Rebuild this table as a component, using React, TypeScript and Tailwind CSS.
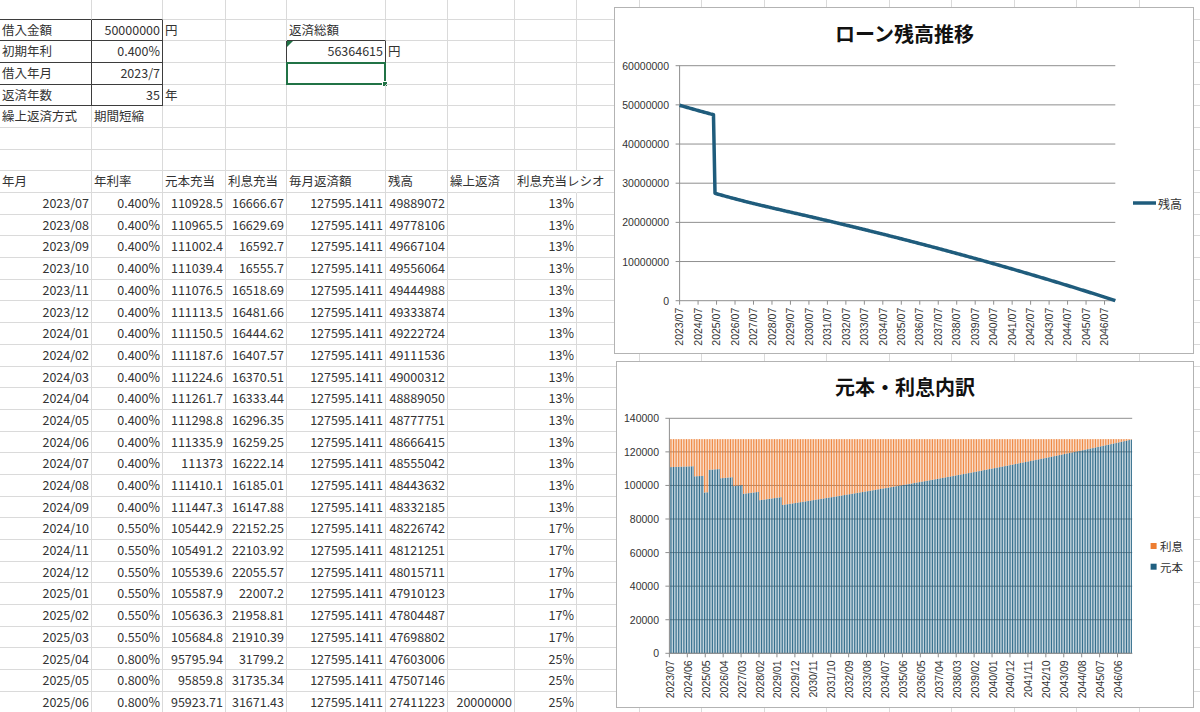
import React from "react";

type Cell = { v: string; r?: boolean } | null;

const tx = (v: string): Cell => ({ v });
const num = (v: string): Cell => ({ v, r: true });

// 返済表（画面に見えている分）
const table: string[][] = [
  ["2023/07", "0.400%", "110928.5", "16666.67", "127595.1411", "49889072", "", "13%"],
  ["2023/08", "0.400%", "110965.5", "16629.69", "127595.1411", "49778106", "", "13%"],
  ["2023/09", "0.400%", "111002.4", "16592.7", "127595.1411", "49667104", "", "13%"],
  ["2023/10", "0.400%", "111039.4", "16555.7", "127595.1411", "49556064", "", "13%"],
  ["2023/11", "0.400%", "111076.5", "16518.69", "127595.1411", "49444988", "", "13%"],
  ["2023/12", "0.400%", "111113.5", "16481.66", "127595.1411", "49333874", "", "13%"],
  ["2024/01", "0.400%", "111150.5", "16444.62", "127595.1411", "49222724", "", "13%"],
  ["2024/02", "0.400%", "111187.6", "16407.57", "127595.1411", "49111536", "", "13%"],
  ["2024/03", "0.400%", "111224.6", "16370.51", "127595.1411", "49000312", "", "13%"],
  ["2024/04", "0.400%", "111261.7", "16333.44", "127595.1411", "48889050", "", "13%"],
  ["2024/05", "0.400%", "111298.8", "16296.35", "127595.1411", "48777751", "", "13%"],
  ["2024/06", "0.400%", "111335.9", "16259.25", "127595.1411", "48666415", "", "13%"],
  ["2024/07", "0.400%", "111373", "16222.14", "127595.1411", "48555042", "", "13%"],
  ["2024/08", "0.400%", "111410.1", "16185.01", "127595.1411", "48443632", "", "13%"],
  ["2024/09", "0.400%", "111447.3", "16147.88", "127595.1411", "48332185", "", "13%"],
  ["2024/10", "0.550%", "105442.9", "22152.25", "127595.1411", "48226742", "", "17%"],
  ["2024/11", "0.550%", "105491.2", "22103.92", "127595.1411", "48121251", "", "17%"],
  ["2024/12", "0.550%", "105539.6", "22055.57", "127595.1411", "48015711", "", "17%"],
  ["2025/01", "0.550%", "105587.9", "22007.2", "127595.1411", "47910123", "", "17%"],
  ["2025/02", "0.550%", "105636.3", "21958.81", "127595.1411", "47804487", "", "17%"],
  ["2025/03", "0.550%", "105684.8", "21910.39", "127595.1411", "47698802", "", "17%"],
  ["2025/04", "0.800%", "95795.94", "31799.2", "127595.1411", "47603006", "", "25%"],
  ["2025/05", "0.800%", "95859.8", "31735.34", "127595.1411", "47507146", "", "25%"],
  ["2025/06", "0.800%", "95923.71", "31671.43", "127595.1411", "27411223", "20000000", "25%"],
];

const sheet: Cell[][] = [
  [],
  [tx("借入金額"), num("50000000"), tx("円"), null, tx("返済総額")],
  [tx("初期年利"), num("0.400%"), null, null, num("56364615"), tx("円")],
  [tx("借入年月"), num("2023/7")],
  [tx("返済年数"), num("35"), tx("年")],
  [tx("繰上返済方式"), tx("期間短縮")],
  [],
  [],
  ["年月", "年利率", "元本充当", "利息充当", "毎月返済額", "残高", "繰上返済", "利息充当レシオ"].map(tx),
  ...table.map((r) => r.map((v) => (v ? num(v) : null))),
];

const COLS = 18;

// グラフ用のシミュレーション
const PAY = 127595.1411;
const rateAt = (i: number) =>
  i < 15 ? 0.004 : i < 21 ? 0.0055 : i < 31 ? 0.008 : i < 39 ? 0.0105 : i < 45 ? 0.013 : i < 55 ? 0.0155 : i < 69 ? 0.018 : 0.0205;

type Month = { prin: number; int: number; bal: number };
const months: Month[] = [];
{
  let bal = 50000000;
  for (let i = 0; bal > 1 && i < 420; i++) {
    const int = (bal * rateAt(i)) / 12;
    const prin = Math.min(PAY - int, bal);
    // 端数の最終回はグラフに出さない
    if (prin < PAY * 0.9 && prin === bal) {
      months[months.length - 1].bal = 0;
      break;
    }
    bal -= prin;
    if (i === 23) bal -= 20000000;
    months.push({ prin, int, bal: Math.max(bal, 0) });
  }
}

const fmtDate = (i: number) => {
  const m = 6 + i;
  return `${2023 + Math.floor(m / 12)}/${String((m % 12) + 1).padStart(2, "0")}`;
};

const LABEL_FONT = "'Liberation Sans', Arial, sans-serif";
const JP_FONT = "'Noto Sans CJK JP', sans-serif";

function BalanceChart() {
  const L = 64.6, R = 500.3, T = 57.7, B = 292.7;
  const n = months.length;
  const px = (i: number) => L + (i * (R - L)) / (n - 1);
  const py = (v: number) => B - (v / 60000000) * (B - T);
  const pts = months.map((m, i) => `${px(i).toFixed(2)},${py(m.bal).toFixed(2)}`).join(" ");
  const ticks = [0, 1, 2, 3, 4, 5, 6];
  const xs: number[] = [];
  for (let i = 0; i < n; i += 12) xs.push(i);

  return (
    <div className="absolute left-[614px] top-[7px] h-[347px] w-[580px] border border-[#b3b3b3] bg-white">
      <svg width="578" height="345" className="block">
        <text x="289.6" y="25" textAnchor="middle" dominantBaseline="central" fontSize="20" fontWeight="700" fontFamily={JP_FONT} fill="#111">
          ローン残高推移
        </text>
        {ticks.map((k) => (
          <g key={k}>
            <line x1={L - 4} x2={R} y1={py(k * 10000000)} y2={py(k * 10000000)} stroke="#8f8f8f" strokeWidth="1" />
            <text x="54" y={py(k * 10000000)} textAnchor="end" dominantBaseline="central" fontSize="10.5" fontFamily={LABEL_FONT} fill="#333">
              {k === 0 ? "0" : `${k}0000000`}
            </text>
          </g>
        ))}
        <line x1={L} x2={L} y1={T} y2={B} stroke="#8f8f8f" />
        {xs.map((i) => (
          <g key={i}>
            <line x1={px(i)} x2={px(i)} y1={B} y2={B + 4} stroke="#8f8f8f" />
            <text transform={`translate(${px(i) + 3.7},${B + 7}) rotate(-90)`} textAnchor="end" fontSize="10.5" fontFamily={LABEL_FONT} fill="#333">
              {fmtDate(i)}
            </text>
          </g>
        ))}
        <polyline points={pts} fill="none" stroke="#1f5c7c" strokeWidth="3.5" strokeLinejoin="round" />
        <line x1="518" x2="541" y1="195" y2="195" stroke="#1f5c7c" strokeWidth="3.5" />
        <text x="543" y="195" dominantBaseline="central" fontSize="12" fontFamily={JP_FONT} fill="#333">
          残高
        </text>
      </svg>
    </div>
  );
}

function BreakdownChart() {
  const L = 52.4, R = 515.2, T = 56.3, B = 291.3;
  const n = months.length;
  const slot = (R - L) / n;
  const py = (v: number) => B - (v / 140000) * (B - T);
  const ticks = [0, 1, 2, 3, 4, 5, 6, 7];
  const xs: number[] = [];
  for (let i = 0; i < n; i += 11) xs.push(i);
  const bw = slot * 0.55;

  return (
    <div className="absolute left-[616px] top-[361px] h-[347px] w-[578px] border border-[#b3b3b3] bg-white">
      <svg width="576" height="345" className="block">
        <text x="288" y="24.7" textAnchor="middle" dominantBaseline="central" fontSize="20" fontWeight="700" fontFamily={JP_FONT} fill="#111">
          元本・利息内訳
        </text>
        {ticks.map((k) => (
          <g key={k}>
            <line x1={L - 4} x2={R} y1={py(k * 20000)} y2={py(k * 20000)} stroke="#8f8f8f" strokeWidth="1" />
            <text x="42" y={py(k * 20000)} textAnchor="end" dominantBaseline="central" fontSize="10.5" fontFamily={LABEL_FONT} fill="#333">
              {k === 0 ? "0" : String(k * 20000)}
            </text>
          </g>
        ))}
        {months.map((m, i) => {
          const x = L + i * slot + (slot - bw) / 2;
          const yp = py(m.prin);
          const yt = py(m.prin + m.int);
          return (
            <g key={i}>
              <rect x={x} width={bw} y={yp} height={B - yp} fill="#1f5f80" />
              <rect x={x} width={bw} y={yt} height={yp - yt} fill="#ed7d31" />
            </g>
          );
        })}
        <line x1={L} x2={L} y1={T} y2={B} stroke="#8f8f8f" />
        <line x1={L} x2={R} y1={B} y2={B} stroke="#8f8f8f" />
        {xs.map((i) => (
          <g key={i}>
            <line x1={L + i * slot} x2={L + i * slot} y1={B} y2={B + 4} stroke="#8f8f8f" />
            <text transform={`translate(${L + (i + 0.5) * slot + 3.7},${B + 7}) rotate(-90)`} textAnchor="end" fontSize="10.5" fontFamily={LABEL_FONT} fill="#333">
              {fmtDate(i)}
            </text>
          </g>
        ))}
        <rect x="533.6" y="181" width="6" height="6" fill="#ed7d31" />
        <text x="543" y="184" dominantBaseline="central" fontSize="11.5" fontFamily={JP_FONT} fill="#333">
          利息
        </text>
        <rect x="533.6" y="201.7" width="6" height="6" fill="#1f5f80" />
        <text x="543" y="204.7" dominantBaseline="central" fontSize="11.5" fontFamily={JP_FONT} fill="#333">
          元本
        </text>
      </svg>
    </div>
  );
}

function SheetCell({ cell, row, col }: { cell: Cell; row: number; col: number }) {
  const inBlock = col <= 1 && row >= 1 && row <= 4;
  const darkRight = inBlock || (row === 2 && (col === 3 || col === 4));
  const darkBottom = (col <= 1 && row >= 0 && row <= 4) || (col === 4 && (row === 1 || row === 2));
  const noRight = row === 8 && col === 7;
  const right = darkRight ? "border-r-[#3d3d3d]" : noRight ? "border-r-transparent" : "border-r-[#dadada]";
  const bottom = darkBottom ? "border-b-[#3d3d3d]" : "border-b-[#dadada]";

  return (
    <div
      className={`relative flex items-center whitespace-nowrap border-r border-b px-[2px] ${right} ${bottom} ${
        cell?.r ? "justify-end" : "justify-start"
      }`}
    >
      {cell?.v}
      {row === 2 && col === 4 && (
        <svg className="absolute left-0 top-0" width="6" height="6">
          <path d="M0 0H6L0 6Z" fill="#217346" />
        </svg>
      )}
      {row === 3 && col === 4 && (
        <div className="absolute bottom-[-1px] left-[-1px] right-[-1px] top-[-1px] border-2 border-[#217346]">
          <div className="absolute bottom-[-4px] right-[-4px] h-[6px] w-[6px] border border-white bg-[#217346]" />
        </div>
      )}
    </div>
  );
}

export default function App() {
  return (
    <div className="relative h-[712px] w-[1200px] overflow-hidden bg-white font-['Noto_Sans_CJK_JP','Liberation_Sans',sans-serif] text-[12.5px] leading-none text-[#333]">
      <div className="grid grid-cols-[92px_71px_63px_61px_99px_62px_67px_62px_repeat(10,62.5px)] grid-rows-[19.5px_repeat(32,21.7px)]">
        {sheet.map((row, r) =>
          Array.from({ length: COLS }, (_, c) => <SheetCell key={`${r}-${c}`} cell={row[c] ?? null} row={r} col={c} />)
        )}
      </div>
      <BalanceChart />
      <BreakdownChart />
    </div>
  );
}
